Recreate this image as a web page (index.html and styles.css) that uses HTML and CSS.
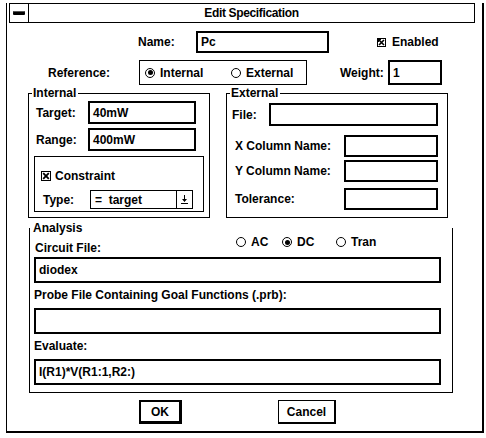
FILE: index.html
```html
<!DOCTYPE html>
<html>
<head>
<meta charset="utf-8">
<link rel="stylesheet" href="styles.css">
</head>
<body>
<div class="dialog">
  <div class="titlebar">
    <div class="sysbox"><span class="sysbar"></span></div>
    <div class="title">Edit Specification</div>
  </div>

  <div class="row name-row">
    <span class="lbl name-lbl">Name:</span>
    <div class="field name-field">Pc</div>
    <div class="check enabled">
      <svg class="cb-small" width="9" height="9" viewBox="0 0 9 9"><rect x="0.5" y="0.5" width="8" height="8" fill="none" stroke="#000"/><path d="M1 1h3v1H2v2H1z" fill="#000"/><path d="M2 2L7 7M7 2L2 7" stroke="#000" stroke-width="1.6"/></svg>
      <span>Enabled</span>
    </div>
  </div>

  <div class="row ref-row">
    <span class="lbl ref-lbl">Reference:</span>
    <div class="radiobox">
      <div class="radio r-int"><span class="rb on"></span><span>Internal</span></div>
      <div class="radio"><span class="rb"></span><span>External</span></div>
    </div>
    <span class="lbl weight-lbl">Weight:</span>
    <div class="field weight-field">1</div>
  </div>

  <div class="groups">
    <div class="group internal">
      <span class="legend">Internal</span>
      <div class="frow target-row"><span class="lbl ilbl">Target:</span><div class="field ifield">40mW</div></div>
      <div class="frow range-row"><span class="lbl ilbl">Range:</span><div class="field ifield">400mW</div></div>
      <div class="cbox">
        <div class="check constraint">
          <svg width="10" height="10" viewBox="0 0 10 10"><rect x="0.5" y="0.5" width="9" height="9" fill="none" stroke="#000"/><path d="M2.2 2.2L7.8 7.8M7.8 2.2L2.2 7.8" stroke="#000" stroke-width="1.8"/></svg>
          <span>Constraint</span>
        </div>
        <div class="frow type-row">
          <span class="lbl type-lbl">Type:</span>
          <div class="dropdown">
            <span class="dd-text">=  target</span>
            <span class="dd-btn"><svg width="7" height="9" viewBox="0 0 7 9"><path d="M3 0h1v4h2L3.5 7 1 4h2z" fill="#000"/><rect x="0" y="8" width="7" height="1" fill="#000"/></svg></span>
          </div>
        </div>
      </div>
    </div>

    <div class="group external">
      <span class="legend">External</span>
      <div class="frow file-row"><span class="lbl file-lbl">File:</span><div class="field file-field"></div></div>
      <div class="frow xcol-row"><span class="lbl col-lbl">X Column Name:</span><div class="field col-field"></div></div>
      <div class="frow ycol-row"><span class="lbl col-lbl">Y Column Name:</span><div class="field col-field"></div></div>
      <div class="frow tol-row"><span class="lbl col-lbl">Tolerance:</span><div class="field col-field"></div></div>
    </div>
  </div>

  <div class="analysis">
    <span class="legend an-legend">Analysis</span>
    <div class="an-head">
      <span class="lbl circuit-lbl">Circuit File:</span>
      <div class="an-radios">
        <div class="radio r-ac"><span class="rb"></span><span>AC</span></div>
        <div class="radio r-dc"><span class="rb on"></span><span>DC</span></div>
        <div class="radio"><span class="rb"></span><span>Tran</span></div>
      </div>
    </div>
    <div class="field wide circuit-field">diodex</div>
    <div class="lbl an-lbl">Probe File Containing Goal Functions (.prb):</div>
    <div class="field wide"></div>
    <div class="lbl an-lbl">Evaluate:</div>
    <div class="field wide">I(R1)*V(R1:1,R2:)</div>
  </div>

  <div class="buttons">
    <div class="btn ok">OK</div>
    <div class="btn cancel">Cancel</div>
  </div>
</div>
</body>
</html>
```

FILE: styles.css
```css
* { box-sizing: border-box; }
body {
  margin: 0;
  background: #fff;
  color: #000;
  font: bold 12px/14px "Liberation Sans", Arial, sans-serif;
}
.dialog {
  margin: 3px 0 0 6px;
  width: 478px;
  height: 430px;
  border-left: 1px solid #000;
  border-right: 2px solid #000;
  border-bottom: 2px solid #000;
}
.titlebar {
  margin-left: 2px;
  width: 466px;
  height: 20px;
  border: 1px solid #000;
  display: flex;
}
.sysbox {
  width: 19px;
  border-right: 1px solid #000;
  display: flex;
  align-items: center;
  justify-content: center;
}
.sysbar {
  width: 12px;
  height: 4px;
  background: #000;
  border-radius: 1px;
  box-shadow: inset 0 1px 0 #555;
}
.title {
  flex: 1;
  text-align: center;
  line-height: 18px;
  letter-spacing: -0.35px;
}
.row { display: flex; align-items: center; }
.lbl { white-space: nowrap; }
.field {
  border: 2px solid #000;
  display: flex;
  align-items: center;
  padding-left: 3px;
  white-space: pre;
}
.name-row { margin-top: 8px; height: 22px; }
.name-lbl { margin-left: 131px; width: 58px; }
.name-field { width: 133px; height: 22px; }
.check { display: flex; align-items: center; }
.enabled { margin-left: 48px; gap: 6px; }

.ref-row { margin-top: 7px; height: 25px; }
.ref-lbl { margin-left: 41px; width: 91px; }
.radiobox {
  width: 168px;
  height: 25px;
  border: 1px solid #000;
  display: flex;
  align-items: center;
  padding-left: 5px;
}
.radio { display: flex; align-items: center; gap: 5px; font-weight: bold; }
.r-int { width: 86px; }
.rb {
  width: 10px;
  height: 10px;
  border: 1.5px solid #000;
  border-radius: 50%;
  display: flex;
  align-items: center;
  justify-content: center;
}
.rb.on::after {
  content: "";
  width: 5px;
  height: 5px;
  border-radius: 50%;
  background: #000;
}
.weight-lbl { margin-left: 33px; width: 48px; }
.weight-field { width: 54px; height: 25px; }

.groups { display: flex; margin-top: 8px; }
.group {
  position: relative;
  height: 125px;
  border: 1px solid #000;
}
.legend {
  position: absolute;
  top: -8px;
  left: 3px;
  background: #fff;
  padding: 0 2px 0 1px;
  line-height: 14px;
}
.internal { margin-left: 21px; width: 182px; }
.external { margin-left: 16px; width: 222px; }
.frow { display: flex; align-items: center; }
.target-row { margin-top: 7px; padding-left: 7px; }
.range-row { margin-top: 4px; padding-left: 7px; }
.ilbl { width: 52px; }
.ifield { width: 108px; height: 23px; }
.cbox {
  margin: 5px 0 0 5px;
  width: 170px;
  height: 56px;
  border: 1px solid #000;
  padding: 12px 0 0 6px;
}
.constraint { gap: 4px; }
.type-row { margin-top: 7px; padding-left: 2px; }
.type-lbl { width: 47px; }
.dropdown {
  width: 103px;
  height: 19px;
  border: 1px solid #000;
  display: flex;
  align-items: center;
}
.dd-text { flex: 1; padding-left: 4px; white-space: pre; }
.dd-btn {
  width: 16px;
  height: 100%;
  border-left: 1px solid #000;
  display: flex;
  align-items: center;
  justify-content: center;
}
.file-row { margin-top: 9px; padding-left: 5px; }
.file-lbl { width: 37px; }
.file-field { width: 169px; height: 23px; }
.xcol-row { margin-top: 9px; padding-left: 8px; }
.ycol-row { margin-top: 3px; padding-left: 8px; }
.tol-row { margin-top: 6px; padding-left: 8px; }
.col-lbl { width: 109px; }
.col-field { width: 94px; height: 22px; }

.analysis {
  position: relative;
  margin: 10px 0 0 22px;
  width: 424px;
  height: 165px;
  border-left: 1px solid #000;
  border-right: 1px solid #000;
  border-bottom: 1px solid #000;
  padding-left: 4px;
}
.an-legend { top: -7px; left: 2px; }
.an-head { display: flex; height: 28px; align-items: flex-start; }
.circuit-lbl { margin-top: 13px; padding-left: 1px; width: 202px; }
.an-radios { display: flex; margin-top: 7px; }
.r-ac { width: 46px; }
.r-dc { width: 54px; }
.wide { width: 407px; height: 26px; }
.circuit-field { margin-top: 1px; }
.an-lbl { margin-top: 5px; margin-bottom: 6px; }

.buttons { display: flex; margin-top: 7px; }
.btn {
  height: 24px;
  display: flex;
  align-items: center;
  justify-content: center;
  font-weight: bold;
}
.ok {
  margin-left: 132px;
  width: 43px;
  border: 2px solid #000;
  border-right-width: 3px;
  border-bottom-width: 3px;
}
.cancel {
  margin-left: 96px;
  width: 58px;
  border: 1px solid #000;
  border-right-width: 2px;
  border-bottom-width: 2px;
}
```
